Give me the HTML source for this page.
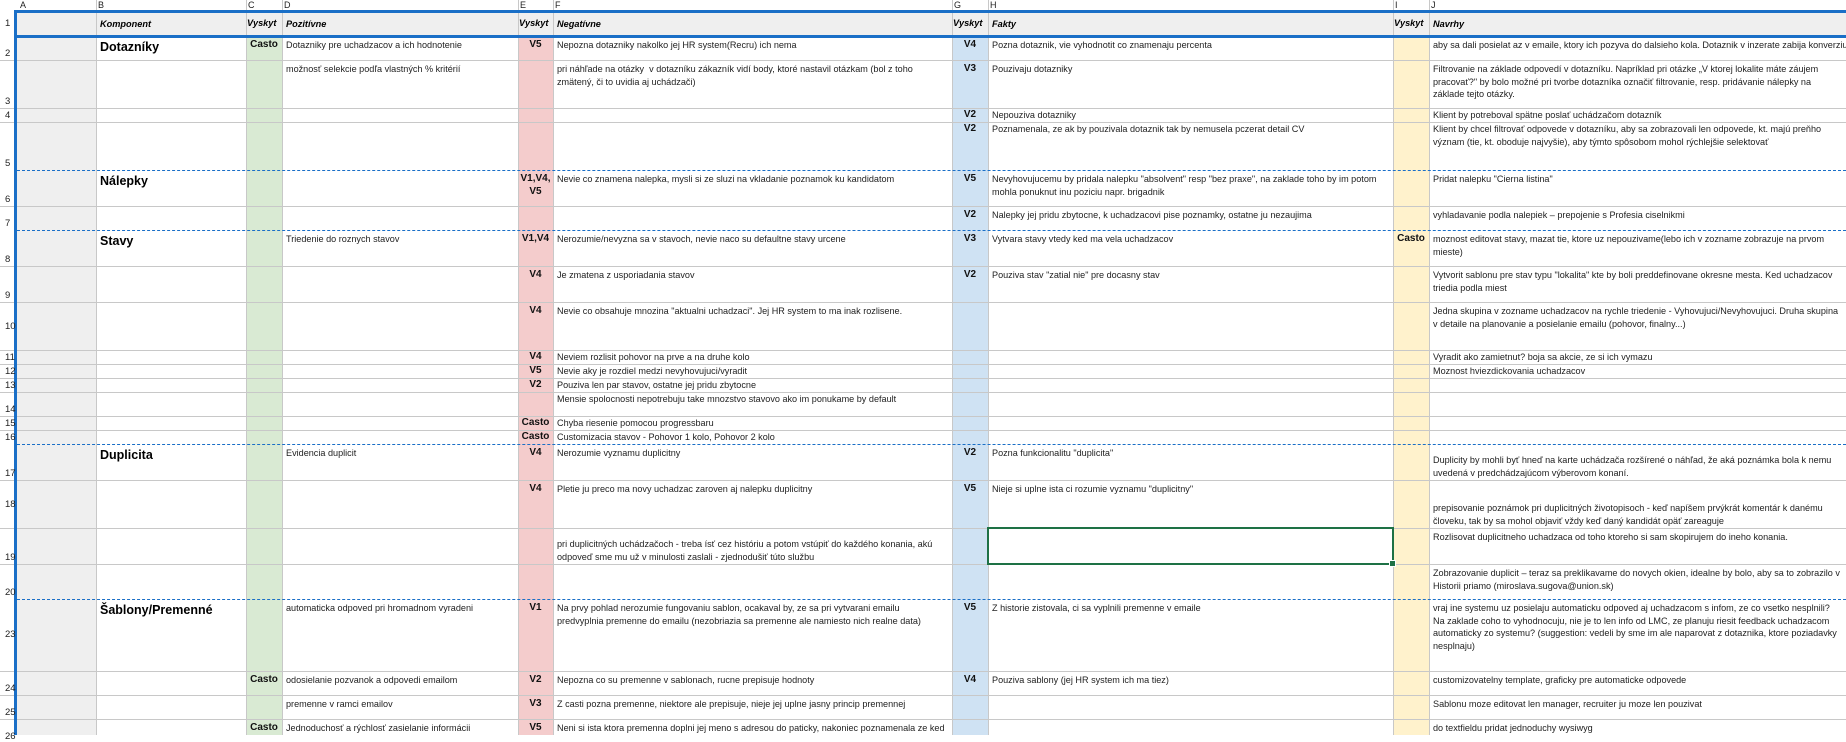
<!DOCTYPE html>
<html><head><meta charset="utf-8">
<style>
*{margin:0;padding:0}
body{width:1846px;height:735px;overflow:hidden;background:#fff;position:relative;font-family:"Liberation Sans",Arial,sans-serif;font-size:9.1px;color:#222;line-height:12.5px}
.s{position:absolute}
.c{position:absolute;padding:2px 4px 1px 4px;box-sizing:border-box;overflow:hidden}
.v{font-weight:bold;text-align:center;font-size:10px;padding:2px 1px;color:#111}
.t{font-weight:bold;font-size:12.5px;line-height:15px;color:#000;padding-top:3px}
.b{display:flex;flex-direction:column;justify-content:flex-end}
.h{font-weight:bold;font-style:italic;color:#000;display:flex;align-items:center;font-size:9.2px}
.vl{position:absolute;top:0;height:735px;width:1px;background:#c8c8c8}
.hl{position:absolute;left:0;width:1846px;height:1px;background:#c8c8c8}
.dl{position:absolute;left:17px;width:1829px;height:0;border-top:1.5px dashed #1a6fc7}
.rn{position:absolute;left:0;width:16px;padding-left:5px;box-sizing:border-box;font-size:9.5px;color:#222;display:flex;align-items:flex-end;line-height:11px}
.cl{position:absolute;top:0;height:10px;font-size:9px;line-height:10px;color:#222}
</style></head><body>
<div class="s" style="left:17px;top:10px;width:1829px;height:26px;background:#efefef"></div>
<div class="s" style="left:17px;top:36px;width:79px;height:699px;background:#efefef"></div>
<div class="s" style="left:246px;top:36px;width:36px;height:699px;background:#d9ead3"></div>
<div class="s" style="left:518px;top:36px;width:35px;height:699px;background:#f4cccc"></div>
<div class="s" style="left:952px;top:36px;width:36px;height:699px;background:#cfe2f3"></div>
<div class="s" style="left:1393px;top:36px;width:36px;height:699px;background:#fff2cc"></div>
<div class="vl" style="left:96px"></div><div class="vl" style="left:246px"></div><div class="vl" style="left:282px"></div><div class="vl" style="left:518px"></div><div class="vl" style="left:553px"></div><div class="vl" style="left:952px"></div><div class="vl" style="left:988px"></div><div class="vl" style="left:1393px"></div><div class="vl" style="left:1429px"></div>
<div class="hl" style="top:60px"></div><div class="hl" style="top:108px"></div><div class="hl" style="top:122px"></div><div class="hl" style="top:206px"></div><div class="hl" style="top:266px"></div><div class="hl" style="top:302px"></div><div class="hl" style="top:350px"></div><div class="hl" style="top:364px"></div><div class="hl" style="top:378px"></div><div class="hl" style="top:392px"></div><div class="hl" style="top:416px"></div><div class="hl" style="top:430px"></div><div class="hl" style="top:480px"></div><div class="hl" style="top:528px"></div><div class="hl" style="top:564px"></div><div class="hl" style="top:671px"></div><div class="hl" style="top:695px"></div><div class="hl" style="top:719px"></div>
<div class="dl" style="top:170px"></div><div class="dl" style="top:230px"></div><div class="dl" style="top:444px"></div><div class="dl" style="top:599px"></div>
<div class="s" style="left:14px;top:10px;width:1832px;height:2.5px;background:#1a6fc7"></div>
<div class="s" style="left:14px;top:35px;width:1832px;height:2.5px;background:#1a6fc7"></div>
<div class="s" style="left:14px;top:10px;width:2.5px;height:725px;background:#1a6fc7"></div>
<div class="cl" style="left:20px">A</div><div class="cl" style="left:98px">B</div><div class="cl" style="left:248px">C</div><div class="cl" style="left:284px">D</div><div class="cl" style="left:520px">E</div><div class="cl" style="left:555px">F</div><div class="cl" style="left:954px">G</div><div class="cl" style="left:990px">H</div><div class="cl" style="left:1395px">I</div><div class="cl" style="left:1431px">J</div>
<div class="rn" style="top:12px;height:22px;align-items:center">1</div>
<div class="rn" style="top:36px;height:23px">2</div>
<div class="rn" style="top:60px;height:47px">3</div>
<div class="rn" style="top:108px;height:13px">4</div>
<div class="rn" style="top:122px;height:47px">5</div>
<div class="rn" style="top:170px;height:35px">6</div>
<div class="rn" style="top:206px;height:23px">7</div>
<div class="rn" style="top:230px;height:35px">8</div>
<div class="rn" style="top:266px;height:35px">9</div>
<div class="rn" style="top:302px;height:30px">10</div>
<div class="rn" style="top:350px;height:13px">11</div>
<div class="rn" style="top:364px;height:13px">12</div>
<div class="rn" style="top:378px;height:13px">13</div>
<div class="rn" style="top:392px;height:23px">14</div>
<div class="rn" style="top:416px;height:13px">15</div>
<div class="rn" style="top:430px;height:13px">16</div>
<div class="rn" style="top:444px;height:35px">17</div>
<div class="rn" style="top:480px;height:30px">18</div>
<div class="rn" style="top:528px;height:35px">19</div>
<div class="rn" style="top:564px;height:34px">20</div>
<div class="rn" style="top:599px;height:71px;align-items:center">23</div>
<div class="rn" style="top:671px;height:23px">24</div>
<div class="rn" style="top:695px;height:23px">25</div>
<div class="rn" style="top:719px;height:23px">26</div>
<div class="c h" style="left:96px;top:12px;width:150px;height:23px">Komponent</div>
<div class="c h" style="left:246px;top:12px;width:36px;height:23px;padding:0 1px">Vyskyt</div>
<div class="c h" style="left:282px;top:12px;width:236px;height:23px">Pozitívne</div>
<div class="c h" style="left:518px;top:12px;width:35px;height:23px;padding:0 1px">Vyskyt</div>
<div class="c h" style="left:553px;top:12px;width:399px;height:23px">Negatívne</div>
<div class="c h" style="left:952px;top:12px;width:36px;height:23px;padding:0 1px">Vyskyt</div>
<div class="c h" style="left:988px;top:12px;width:405px;height:23px">Fakty</div>
<div class="c h" style="left:1393px;top:12px;width:36px;height:23px;padding:0 1px">Vyskyt</div>
<div class="c h" style="left:1429px;top:12px;width:417px;height:23px">Navrhy</div>
<div class="c t" style="left:96px;top:37px;width:150px;height:23px">Dotazníky</div>
<div class="c v" style="left:246px;top:37px;width:36px;height:23px">Casto</div>
<div class="c" style="left:282px;top:37px;width:236px;height:23px">Dotazniky pre uchadzacov a ich hodnotenie</div>
<div class="c v" style="left:518px;top:37px;width:35px;height:23px">V5</div>
<div class="c" style="left:553px;top:37px;width:399px;height:23px">Nepozna dotazniky nakolko jej HR system(Recru) ich nema</div>
<div class="c v" style="left:952px;top:37px;width:36px;height:23px">V4</div>
<div class="c" style="left:988px;top:37px;width:405px;height:23px">Pozna dotaznik, vie vyhodnotit co znamenaju percenta</div>
<div class="c" style="left:1429px;top:37px;width:417px;height:23px;white-space:nowrap">aby sa dali posielat az v emaile, ktory ich pozyva do dalsieho kola. Dotaznik v inzerate zabija konverziu</div>
<div class="c" style="left:282px;top:61px;width:236px;height:47px">možnosť selekcie podľa vlastných % kritérií</div>
<div class="c" style="left:553px;top:61px;width:399px;height:47px">pri náhľade na otázky&nbsp; v dotazníku zákazník vidí body, ktoré nastavil otázkam (bol z toho zmätený, či to uvidia aj uchádzači)</div>
<div class="c v" style="left:952px;top:61px;width:36px;height:47px">V3</div>
<div class="c" style="left:988px;top:61px;width:405px;height:47px">Pouzivaju dotazniky</div>
<div class="c" style="left:1429px;top:61px;width:417px;height:47px">Filtrovanie na základe odpovedí v dotazníku. Napríklad pri otázke „V ktorej lokalite máte záujem pracovať?" by bolo možné pri tvorbe dotazníka označiť filtrovanie, resp. pridávanie nálepky na základe tejto otázky.</div>
<div class="c v" style="left:952px;top:108px;width:36px;height:14px;padding-top:1px">V2</div>
<div class="c" style="left:988px;top:108px;width:405px;height:14px;padding-top:1px">Nepouziva dotazniky</div>
<div class="c" style="left:1429px;top:108px;width:417px;height:14px;padding-top:1px">Klient by potreboval spätne poslať uchádzačom dotazník</div>
<div class="c v" style="left:952px;top:122px;width:36px;height:47px;padding-top:1px">V2</div>
<div class="c" style="left:988px;top:122px;width:405px;height:47px;padding-top:1px">Poznamenala, ze ak by pouzivala dotaznik tak by nemusela pczerat detail CV</div>
<div class="c" style="left:1429px;top:122px;width:417px;height:47px;padding-top:1px">Klient by chcel filtrovať odpovede v dotazníku, aby sa zobrazovali len odpovede, kt. majú preňho význam (tie, kt. oboduje najvyšie), aby týmto spôsobom mohol rýchlejšie selektovať</div>
<div class="c t" style="left:96px;top:171px;width:150px;height:35px">Nálepky</div>
<div class="c v" style="left:518px;top:171px;width:35px;height:35px">V1,V4, V5</div>
<div class="c" style="left:553px;top:171px;width:399px;height:35px">Nevie co znamena nalepka, mysli si ze sluzi na vkladanie poznamok ku kandidatom</div>
<div class="c v" style="left:952px;top:171px;width:36px;height:35px">V5</div>
<div class="c" style="left:988px;top:171px;width:405px;height:35px">Nevyhovujucemu by pridala nalepku "absolvent" resp "bez praxe", na zaklade toho by im potom mohla ponuknut inu poziciu napr. brigadnik</div>
<div class="c" style="left:1429px;top:171px;width:417px;height:35px">Pridat nalepku "Cierna listina"</div>
<div class="c v" style="left:952px;top:207px;width:36px;height:23px">V2</div>
<div class="c" style="left:988px;top:207px;width:405px;height:23px">Nalepky jej pridu zbytocne, k uchadzacovi pise poznamky, ostatne ju nezaujima</div>
<div class="c" style="left:1429px;top:207px;width:417px;height:23px">vyhladavanie podla nalepiek – prepojenie s Profesia ciselnikmi</div>
<div class="c t" style="left:96px;top:231px;width:150px;height:35px">Stavy</div>
<div class="c" style="left:282px;top:231px;width:236px;height:35px">Triedenie do roznych stavov</div>
<div class="c v" style="left:518px;top:231px;width:35px;height:35px">V1,V4</div>
<div class="c" style="left:553px;top:231px;width:399px;height:35px">Nerozumie/nevyzna sa v stavoch, nevie naco su defaultne stavy urcene</div>
<div class="c v" style="left:952px;top:231px;width:36px;height:35px">V3</div>
<div class="c" style="left:988px;top:231px;width:405px;height:35px">Vytvara stavy vtedy ked ma vela uchadzacov</div>
<div class="c v" style="left:1393px;top:231px;width:36px;height:35px">Casto</div>
<div class="c" style="left:1429px;top:231px;width:417px;height:35px">moznost editovat stavy, mazat tie, ktore uz nepouzivame(lebo ich v zozname zobrazuje na prvom mieste)</div>
<div class="c v" style="left:518px;top:267px;width:35px;height:35px">V4</div>
<div class="c" style="left:553px;top:267px;width:399px;height:35px">Je zmatena z usporiadania stavov</div>
<div class="c v" style="left:952px;top:267px;width:36px;height:35px">V2</div>
<div class="c" style="left:988px;top:267px;width:405px;height:35px">Pouziva stav "zatial nie" pre docasny stav</div>
<div class="c" style="left:1429px;top:267px;width:417px;height:35px">Vytvorit sablonu pre stav typu "lokalita" kte by boli preddefinovane okresne mesta. Ked uchadzacov triedia podla miest</div>
<div class="c v" style="left:518px;top:303px;width:35px;height:47px">V4</div>
<div class="c" style="left:553px;top:303px;width:399px;height:47px">Nevie co obsahuje mnozina "aktualni uchadzaci". Jej HR system to ma inak rozlisene.</div>
<div class="c" style="left:1429px;top:303px;width:417px;height:47px">Jedna skupina v zozname uchadzacov na rychle triedenie - Vyhovujuci/Nevyhovujuci. Druha skupina v detaile na planovanie a posielanie emailu (pohovor, finalny...)</div>
<div class="c v" style="left:518px;top:350px;width:35px;height:14px;padding-top:1px">V4</div>
<div class="c" style="left:553px;top:350px;width:399px;height:14px;padding-top:1px">Neviem rozlisit pohovor na prve a na druhe kolo</div>
<div class="c" style="left:1429px;top:350px;width:417px;height:14px;padding-top:1px">Vyradit ako zamietnut? boja sa akcie, ze si ich vymazu</div>
<div class="c v" style="left:518px;top:364px;width:35px;height:14px;padding-top:1px">V5</div>
<div class="c" style="left:553px;top:364px;width:399px;height:14px;padding-top:1px">Nevie aky je rozdiel medzi nevyhovujuci/vyradit</div>
<div class="c" style="left:1429px;top:364px;width:417px;height:14px;padding-top:1px">Moznost hviezdickovania uchadzacov</div>
<div class="c v" style="left:518px;top:378px;width:35px;height:14px;padding-top:1px">V2</div>
<div class="c" style="left:553px;top:378px;width:399px;height:14px;padding-top:1px">Pouziva len par stavov, ostatne jej pridu zbytocne</div>
<div class="c" style="left:553px;top:392px;width:399px;height:24px;padding-top:1px">Mensie spolocnosti nepotrebuju take mnozstvo stavovo ako im ponukame by default</div>
<div class="c v" style="left:518px;top:416px;width:35px;height:14px;padding-top:1px">Casto</div>
<div class="c" style="left:553px;top:416px;width:399px;height:14px;padding-top:1px">Chyba riesenie pomocou progressbaru</div>
<div class="c v" style="left:518px;top:430px;width:35px;height:14px;padding-top:1px">Casto</div>
<div class="c" style="left:553px;top:430px;width:399px;height:14px;padding-top:1px">Customizacia stavov - Pohovor 1 kolo, Pohovor 2 kolo</div>
<div class="c t" style="left:96px;top:445px;width:150px;height:35px">Duplicita</div>
<div class="c" style="left:282px;top:445px;width:236px;height:35px">Evidencia duplicit</div>
<div class="c v" style="left:518px;top:445px;width:35px;height:35px">V4</div>
<div class="c" style="left:553px;top:445px;width:399px;height:35px">Nerozumie vyznamu duplicitny</div>
<div class="c v" style="left:952px;top:445px;width:36px;height:35px">V2</div>
<div class="c" style="left:988px;top:445px;width:405px;height:35px">Pozna funkcionalitu "duplicita"</div>
<div class="c b" style="left:1429px;top:445px;width:417px;height:35px">Duplicity by mohli byť hneď na karte uchádzača rozšírené o náhľad, že aká poznámka bola k nemu uvedená v predchádzajúcom výberovom konaní.</div>
<div class="c v" style="left:518px;top:481px;width:35px;height:47px">V4</div>
<div class="c" style="left:553px;top:481px;width:399px;height:47px">Pletie ju preco ma novy uchadzac zaroven aj nalepku duplicitny</div>
<div class="c v" style="left:952px;top:481px;width:36px;height:47px">V5</div>
<div class="c" style="left:988px;top:481px;width:405px;height:47px">Nieje si uplne ista ci rozumie vyznamu "duplicitny"</div>
<div class="c b" style="left:1429px;top:481px;width:417px;height:47px">prepisovanie poznámok pri duplicitných životopisoch - keď napíšem prvýkrát komentár k danému človeku, tak by sa mohol objaviť vždy keď daný kandidát opäť zareaguje</div>
<div class="c b" style="left:553px;top:529px;width:399px;height:35px">pri duplicitných uchádzačoch - treba ísť cez históriu a potom vstúpiť do každého konania, akú odpoveď sme mu už v minulosti zaslali - zjednodušiť túto službu</div>
<div class="c" style="left:1429px;top:529px;width:417px;height:35px">Rozlisovat duplicitneho uchadzaca od toho ktoreho si sam skopirujem do ineho konania.</div>
<div class="s" style="left:987px;top:527px;width:403px;height:34px;border:2px solid #1e7145"></div>
<div class="s" style="left:1389px;top:560px;width:5px;height:5px;background:#1e7145;border:1px solid #fff"></div>
<div class="c" style="left:1429px;top:565px;width:417px;height:34px">Zobrazovanie duplicit – teraz sa preklikavame do novych okien, idealne by bolo, aby sa to zobrazilo v Historii priamo (miroslava.sugova@union.sk)</div>
<div class="c t" style="left:96px;top:600px;width:150px;height:71px">Šablony/Premenné</div>
<div class="c" style="left:282px;top:600px;width:236px;height:71px">automaticka odpoved pri hromadnom vyradeni</div>
<div class="c v" style="left:518px;top:600px;width:35px;height:71px">V1</div>
<div class="c" style="left:553px;top:600px;width:399px;height:71px">Na prvy pohlad nerozumie fungovaniu sablon, ocakaval by, ze sa pri vytvarani emailu predvyplnia premenne do emailu (nezobriazia sa premenne ale namiesto nich realne data)</div>
<div class="c v" style="left:952px;top:600px;width:36px;height:71px">V5</div>
<div class="c" style="left:988px;top:600px;width:405px;height:71px">Z historie zistovala, ci sa vyplnili premenne v emaile</div>
<div class="c" style="left:1429px;top:600px;width:417px;height:71px">vraj ine systemu uz posielaju automaticku odpoved aj uchadzacom s infom, ze co vsetko nesplnili? Na zaklade coho to vyhodnocuju, nie je to len info od LMC, ze planuju riesit feedback uchadzacom automaticky zo systemu? (suggestion: vedeli by sme im ale naparovat z dotaznika, ktore poziadavky nesplnaju)</div>
<div class="c v" style="left:246px;top:672px;width:36px;height:23px">Casto</div>
<div class="c" style="left:282px;top:672px;width:236px;height:23px">odosielanie pozvanok a odpovedi emailom</div>
<div class="c v" style="left:518px;top:672px;width:35px;height:23px">V2</div>
<div class="c" style="left:553px;top:672px;width:399px;height:23px">Nepozna co su premenne v sablonach, rucne prepisuje hodnoty</div>
<div class="c v" style="left:952px;top:672px;width:36px;height:23px">V4</div>
<div class="c" style="left:988px;top:672px;width:405px;height:23px">Pouziva sablony (jej HR system ich ma tiez)</div>
<div class="c" style="left:1429px;top:672px;width:417px;height:23px">customizovatelny template, graficky pre automaticke odpovede</div>
<div class="c" style="left:282px;top:696px;width:236px;height:23px">premenne v ramci emailov</div>
<div class="c v" style="left:518px;top:696px;width:35px;height:23px">V3</div>
<div class="c" style="left:553px;top:696px;width:399px;height:23px">Z casti pozna premenne, niektore ale prepisuje, nieje jej uplne jasny princip premennej</div>
<div class="c" style="left:1429px;top:696px;width:417px;height:23px">Sablonu moze editovat len manager, recruiter ju moze len pouzivat</div>
<div class="c v" style="left:246px;top:720px;width:36px;height:15px">Casto</div>
<div class="c" style="left:282px;top:720px;width:236px;height:15px">Jednoduchosť a rýchlosť zasielanie informácii uchádzačom</div>
<div class="c v" style="left:518px;top:720px;width:35px;height:15px">V5</div>
<div class="c" style="left:553px;top:720px;width:399px;height:15px">Neni si ista ktora premenna doplni jej meno s adresou do paticky, nakoniec poznamenala ze ked je</div>
<div class="c" style="left:1429px;top:720px;width:417px;height:15px">do textfieldu pridat jednoduchy wysiwyg</div>
</body></html>
